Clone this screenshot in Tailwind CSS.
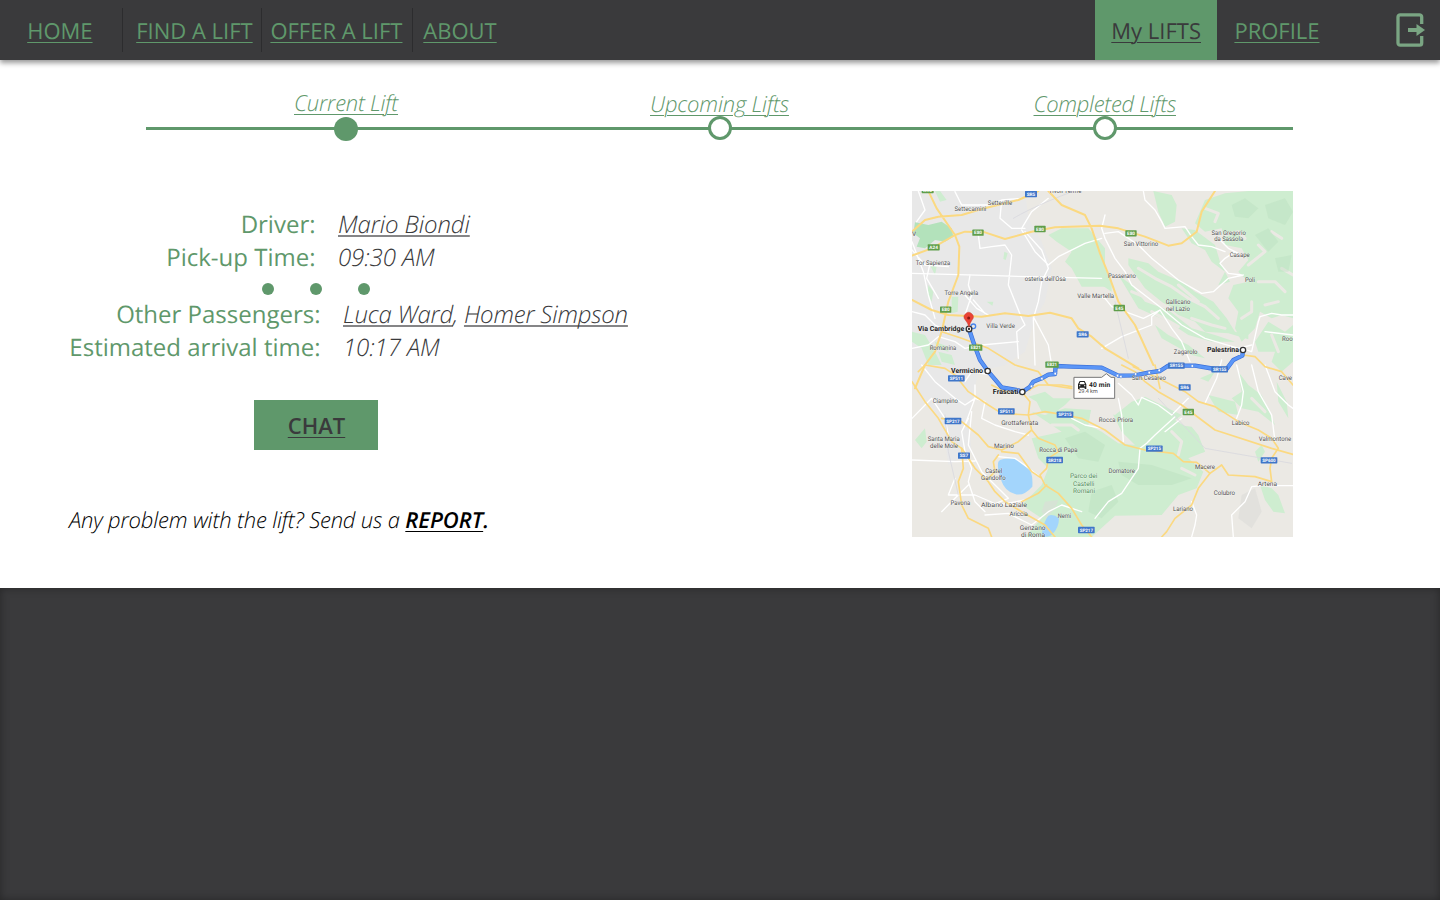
<!DOCTYPE html>
<html lang="en">
<head>
<meta charset="utf-8">
<title>My Lifts</title>
<script src="https://cdn.jsdelivr.net/npm/@tailwindcss/browser@4"></script>
</head>
<body class="w-[1440px] h-[900px] overflow-hidden flex flex-col bg-white font-['Open_Sans',sans-serif] text-[#5f986b] [text-rendering:geometricPrecision]">

<header class="relative h-[60px] shrink-0 flex bg-[#3a3a3c] shadow-[0_3px_5px_rgba(0,0,0,0.4)] text-[22px] leading-[32px] whitespace-nowrap">
  <nav class="flex items-center">
    <div class="w-[123px] h-[44px] flex items-center pl-[27.200px] border-r border-[#2c2c2e]"><a class="pt-px underline decoration-1 underline-offset-[3px]">HOME</a></div>
    <div class="w-[139px] h-[44px] flex items-center pl-[13.200px] border-r border-[#2c2c2e]"><a class="pt-px underline decoration-1 underline-offset-[3px]">FIND A LIFT</a></div>
    <div class="w-[151px] h-[44px] flex items-center pl-[8.400px] border-r border-[#2c2c2e]"><a class="pt-px underline decoration-1 underline-offset-[3px]">OFFER A LIFT</a></div>
    <div class="h-[44px] flex items-center pl-[10.300px]"><a class="pt-px underline decoration-1 underline-offset-[3px]">ABOUT</a></div>
  </nav>
  <div class="ml-auto flex items-center">
    <div class="w-[122px] h-[60px] flex items-center pl-[16.300px] bg-[#5f986b] text-[#3a3a3c]"><a class="pt-px underline decoration-1 underline-offset-[3px]">My LIFTS</a></div>
    <div class="w-[179px] h-[60px] flex items-center pl-[17.400px]"><a class="pt-px underline decoration-1 underline-offset-[3px]">PROFILE</a></div>
    <svg class="w-[29px] h-[34px] mr-[15px]" viewBox="0 0 29 34" fill="none" stroke="#7aa583" stroke-width="3.300"><path d="M25.700 11V4a2.200 2.200 0 0 0-2.200-2.200H4.200A2.200 2.200 0 0 0 2 4v26A2.200 2.200 0 0 0 4.200 32.200h19.300a2.200 2.200 0 0 0 2.200-2.200V23"/><path d="M12 17h9" stroke-width="4"/><path d="M20.500 11 29 17 20.500 23z" fill="#7aa583" stroke="none"/></svg>
  </div>
</header>

<main class="h-[528px] shrink-0">
  <section class="relative h-[90px] w-[1440px] text-[22px] leading-[30px] font-light italic whitespace-nowrap">
    <div class="absolute left-[146px] top-[66.500px] w-[1147px] h-[3px] bg-[#5f986b]"></div>
    <a class="absolute left-[294px] top-[28px] underline decoration-1 underline-offset-[3px] tracking-[-0.25px]">Current Lift</a>
    <a class="absolute left-[650px] top-[29px] underline decoration-1 underline-offset-[3px] tracking-[-0.18px]">Upcoming Lifts</a>
    <a class="absolute left-[1033.500px] top-[29px] underline decoration-1 underline-offset-[3px] tracking-[-0.31px]">Completed Lifts</a>
    <span class="absolute left-[334px] top-[57px] size-6 rounded-full bg-[#5f986b]"></span>
    <span class="absolute left-[708px] top-[56px] size-6 rounded-full bg-white border-3 border-[#5f986b]"></span>
    <span class="absolute left-[1093px] top-[56px] size-6 rounded-full bg-white border-3 border-[#5f986b]"></span>
  </section>

  <div class="flex justify-between pr-[147px] pt-[41px]">
    <section class="pt-[17px] text-[24px] leading-[33px] whitespace-nowrap">
      <div class="flex"><span class="w-[315.500px] text-right">Driver:</span><span class="ml-[22.500px] font-light italic text-[#3a3a3c] tracking-[-0.13px]"><a class="underline decoration-2 decoration-[#858587] underline-offset-[2px] [text-decoration-skip-ink:none]">Mario Biondi</a></span></div>
      <div class="flex"><span class="w-[315.500px] text-right">Pick-up Time:</span><span class="ml-[22.500px] font-light italic text-[#3a3a3c] tracking-[-0.1px]">09:30 AM</span></div>
      <div class="flex gap-9 pl-[262px] pt-[9px] pb-[3px]"><i class="size-3 rounded-full bg-[#5f986b]"></i><i class="size-3 rounded-full bg-[#5f986b]"></i><i class="size-3 rounded-full bg-[#5f986b]"></i></div>
      <div class="flex"><span class="w-[320.500px] text-right">Other Passengers:</span><span class="ml-[22.500px] font-light italic text-[#3a3a3c] tracking-[-0.2px]"><a class="underline decoration-2 decoration-[#858587] underline-offset-[2px] [text-decoration-skip-ink:none]">Luca Ward</a>, <a class="underline decoration-2 decoration-[#858587] underline-offset-[2px] [text-decoration-skip-ink:none]">Homer Simpson</a></span></div>
      <div class="flex"><span class="w-[320.500px] text-right">Estimated arrival time:</span><span class="ml-[22.500px] font-light italic text-[#3a3a3c] tracking-[-0.1px]">10:17 AM</span></div>
      <button class="ml-[254px] mt-[36px] w-[124px] h-[50px] flex items-center justify-center bg-[#5f986b] text-[#3a3a3c] text-[22px] leading-[30px] font-semibold"><span class="ml-px underline decoration-1 underline-offset-[3px]">CHAT</span></button>
      <p class="ml-[69px] mt-[55px] text-[22px] leading-[30px] font-light italic text-black tracking-[-0.18px]">Any problem with the lift? Send us a <b class="font-semibold tracking-normal"><a class="underline decoration-1 underline-offset-[3px]">REPORT</a>.</b></p>
    </section>

    <svg id="map" class="w-[381px] h-[346px] font-[Roboto,sans-serif]" viewBox="21 18 1143 1038" stroke-linejoin="round" stroke-linecap="round">
      <rect x="21" y="18" width="1143" height="1038" fill="#ebe9e4"/>
      <path fill="#e8e8e8" d="M21 18H360L370 100 410 170 440 250 420 350 390 400 360 500 300 540 220 560 190 700 200 800 130 840 110 700 21 600z"/>
      <!-- parks and hills -->
      <g fill="#ceedd0">
        <path fill="#b3e2bb" d="M30 112 70 120 110 110 140 130 145 155 120 170 90 165 60 190 35 185 45 160 25 145z"/>
        <path d="M90 18 105 18 125 45 105 50zM430 150 470 130 550 130 600 190 600 305 530 305 500 250 480 230 500 200 455 170zM298 200 308 205 302 225 295 222zM70 300 85 320 80 350 68 330zM140 335 160 335 158 380 140 385zM75 240 95 245 90 270zM245 350 265 350 262 362zM21 440 60 450 90 500 110 540 70 540 50 490 21 470zM90 470 130 485 130 500 95 490zM30 765 60 730 65 770 50 790zM100 500 140 510 150 540 110 530z"/>
        <path d="M745 18 800 30 815 60 810 110 780 125 760 80z"/>
        <path d="M885 80 900 45 960 25 1030 18H1164V400L1130 390 1100 400 1065 380 1050 430 1010 470 990 430 1000 380 970 340 985 300 1030 290 1000 260 1030 225 1010 190 960 180 950 130 900 140 870 115z"/>
        <path d="M830 130 870 135 930 180 945 230 975 290 940 300 960 260 920 230 900 195 860 175z"/>
        <path d="M670 220 730 235 760 260 830 290 870 320 925 350 965 400 990 440 1030 450 1030 463 970 445 900 440 870 410 820 390 770 350 720 310 670 240zM640 270 680 300 720 350 790 375 860 430 930 450 990 470 920 470 850 450 790 410 700 370zM750 420 790 450 850 480 900 520 860 510 770 460zM590 235 620 285 620 320 590 300z"/>
        <path d="M1050 470 1090 410 1140 440 1164 420V530L1130 560 1100 530 1110 500 1060 500zM1000 560 1030 600 1070 630 1110 720 1060 680 1010 670 980 640 1010 620zM1115 590 1145 650 1150 700 1120 650zM910 630 990 650 1000 690 940 680zM885 580 930 560 910 590z"/>
        <path d="M370 635 420 620 445 640 500 640 480 660 440 690 410 680 395 650zM380 680 420 690 480 670 560 675 630 690 680 650 720 635 770 660 830 690 810 705 850 730 880 760 900 800 850 820 895 860 875 910 820 930 770 990 630 992 560 1056 360 1056 410 1000 350 960 410 900 430 850 400 820 380 760 470 740z"/>
        <path d="M820 720 860 725 880 750 900 800 860 810 850 770zM1065 900 1100 910 1120 930 1140 985 1105 980 1080 945zM1050 800 1070 780 1080 800 1060 830z"/>
      </g>
      <g fill="none" stroke="#ebe9e4" stroke-width="9">
        <path d="M700 250 750 280 800 305 850 340 900 365 940 400M680 320 740 345 800 370M820 300 880 350M860 400 920 420 960 430M740 380 820 425M900 70 940 85 930 110M1030 240 1080 200 1060 180M1100 140 1130 160M1060 290 1110 290 1140 320M1010 400 1040 380 1040 350M1080 360 1120 350M960 150 1000 140 1020 160M1100 450 1120 500M1130 250 1164 270"/>
        <path d="M800 740 830 770 820 810M870 870 830 850M560 690 580 720 620 740M440 720 500 720 520 735M1040 640 1080 680"/>
      </g>
      <path fill="#ebe9e4" d="M560 665 620 680 650 740 690 780 640 775 590 740 550 720z"/>
      <g fill="#b9dfbd" opacity=".4">
        <path d="M980 60 1020 40 1060 70 1030 100 990 95zM1080 60 1140 40 1164 80 1140 120 1090 100zM1050 150 1090 130 1120 170 1090 200zM1110 220 1160 210 1150 260 1120 260z"/>
        <path d="M480 760 540 740 600 780 580 830 520 820zM640 830 740 840 860 880 800 900 700 900 650 870zM560 920 620 900 640 950 590 1000 550 980z"/>
      </g>
      <path fill="#dcdcd8" opacity=".6" d="M1010 930 1050 910 1070 980 1040 1030 1000 1000zM420 950 460 945 450 970 425 1000 410 980z"/>
      <!-- lakes -->
      <path fill="#a3d5fc" d="M280 830Q285 820 330 820Q350 835 368 850Q385 860 382 905Q355 935 330 927Q300 920 288 885Q275 850 280 830zM430 992Q445 985 462 1000Q462 1030 440 1050Q425 1060 410 1050Q415 1010 430 992z"/>
      <!-- minor roads -->
      <g fill="none" stroke="#fff" stroke-width="4">
        <path d="M21 195 60 240 130 245M21 265 270 272 370 275 590 280M40 18 60 75 35 110M21 170 55 260 70 330 90 400M75 235 65 280 100 340M150 20 170 60 250 60 290 45 350 40M290 45 285 100 320 130 360 130M350 130 380 80 430 40M220 150 225 190 260 185 300 180 320 210 310 300 350 400 360 420 335 440 340 520M360 140 410 195 430 250 410 290 400 350 385 400 390 540M350 135 390 200 430 240 460 215 540 175 590 160M385 395 430 480 440 540M195 270 190 300 200 330 180 390M180 330 215 370 250 390M205 345 240 385M21 380 60 390 90 420 130 440M21 490 70 480 100 455 150 470 180 490 230 480 340 470"/>
        <path d="M600 90 590 130 600 160 630 220 660 260 680 300 770 370 830 420 900 460 1000 490M715 18 720 45 750 75 770 110 780 130 840 125 860 155 880 180 920 185 960 200M600 145 640 140 700 180 740 220 820 285 890 325 925 320 970 280 1015 270M1010 270 970 265 945 235 960 220 990 200M945 165 970 190 1000 205M765 375 715 400 620 365 600 340 585 335M765 375 740 395 740 420 650 455 590 490M765 375 800 430 830 470 855 530M1164 390 1130 390 1100 385 1065 395 1060 410 1040 500 1010 490M1165 450 1080 440M1000 490 1040 480"/>
        <path d="M1040 540 1060 620 1100 690 1110 770M1080 540 1110 620 1150 660 1164 670M950 525 935 580 900 655M995 540 1015 620 1010 660 995 700M640 595 680 630 700 660 710 637 760 660 800 690 850 640M810 695 750 750 725 775 705 790 700 850 650 925 610 950 570 1000M640 640 650 690 655 770M860 950 875 990 870 1020 860 1056M1164 902 1070 902 1040 905 1020 950 980 990 985 1056M830 700 780 740"/>
        <path d="M50 540 90 590 150 640 180 660 210 640 240 650 230 700 270 720 330 740 370 750M190 700 170 740 180 800 200 850 190 890 210 950 240 980M21 825 150 830 210 828M180 590 200 560 260 570M200 680 190 780 230 860 270 900 310 940 260 960M150 880 130 930 210 930 280 960 360 945M110 980 150 940 190 900M210 600 210 640 180 720M21 700 80 640 120 700 130 750M280 815 330 820 365 845 410 880M500 700 540 720 590 730M240 990 310 985 380 1020 430 980 470 960 530 980"/>
      </g>
      <path d="M325 100Q410 50 585 -10M120 690 130 800 160 930M630 350 670 520M760 640 900 790 1160 835" fill="none" stroke="#d9d9de" stroke-width="2.500"/>
      <!-- highways -->
      <g fill="none" stroke="#fbd981" stroke-width="5">
        <path stroke-width="6" d="M70 18 95 70 150 150 163 185 160 270 130 350 110 440 90 500 60 540 30 610M21 212 80 190 150 150 180 140 240 142 300 162 380 140 450 127 585 122 640 130 720 155 790 182 830 175 875 140 890 80 930 18M21 140 60 105 100 95 170 90 230 72 340 45 400 18M21 345 80 375 130 390 230 395 300 385 370 393 435 383 500 400 520 430 560 455 600 490 650 520 700 550M430 18 470 60 540 90 560 130 585 205 615 280 640 350 690 420 745 540"/>
        <path d="M110 440 170 460 250 490 330 540 400 560 430 600 500 610M21 590 60 650 100 700 140 770 170 790 210 850 250 890 270 920 300 950 350 980 420 1020 450 1056M40 560 60 540 120 550 150 570 190 620 250 660 290 685 370 690 420 680 480 690 530 700 600 735 660 780 720 795 805 805 835 830 875 832 915 865"/>
        <path d="M110 700 170 710 220 750 250 785 290 795 340 770 380 735 370 690 375 650 350 620M380 735 400 760 450 780 460 800 430 820 425 850 405 870 420 900 460 925 500 970 530 1020 560 1056M425 900 400 925 350 950M280 810 265 830 270 860 250 880M290 800 340 805 380 860 410 880M170 790 175 850 160 890 170 960 190 1000 250 1030 260 1056"/>
        <path d="M375 615 350 620 300 620 260 600M370 615 400 600 470 600 500 605M650 540 690 560 720 590 760 620 830 660 930 735 1100 790 1164 808M685 545 760 580 800 600 840 620 880 650 930 665 1000 710 1060 735 1100 760 1120 790 1100 820 1095 850 1100 890M915 865 950 840 970 870 1050 875 1100 890M915 865 880 910 860 960 810 1000 785 1040 770 1056M600 490 590 480M1015 510 1050 515 1080 545 1130 560 1164 600M750 540 765 610"/>
      </g>
      <!-- route -->
      <g fill="none">
        <path d="M192 432 208 480 225 525 250 560 270 583 290 607 340 616 352 621 375 605 385 590 410 580 430 569 450 567 452 543 500 545 590 548 640 572 690 571 730 563 765 558 790 542 870 542 930 552 965 552 985 525 1012 512 1014 497" stroke="#3c70d8" stroke-width="13"/>
        <path d="M192 432 208 480 225 525 250 560 270 583 290 607 340 616 352 621 375 605 385 590 410 580 430 569 450 567 452 543 500 545 590 548 640 572 690 571 730 563 765 558 790 542 870 542 930 552 965 552 985 525 1012 512 1014 497" stroke="#5b96f7" stroke-width="9"/>
        <circle cx="205" cy="424" r="7" stroke="#4a86ec" stroke-width="4"/>
      </g>
      <g fill="#fff" stroke="#4a7fdc" stroke-width="1.500"><circle cx="380" cy="604" r="4"/><circle cx="411" cy="581" r="4"/><circle cx="451" cy="566" r="4"/><circle cx="638" cy="572" r="4"/><circle cx="648" cy="575" r="4"/><circle cx="692" cy="567" r="4"/><circle cx="733" cy="563" r="4"/><circle cx="763" cy="556" r="4"/><circle cx="862" cy="543" r="4"/></g>
      <g id="shields"></g>
      <g id="labels" text-anchor="middle" paint-order="stroke" stroke="#fff" stroke-opacity=".6" stroke-width="2"></g>
      <g fill="#fff" stroke="#333" stroke-width="4"><circle cx="192" cy="432" r="8.500"/><circle cx="248" cy="558" r="8"/><circle cx="352" cy="621" r="8"/><circle cx="1014" cy="495" r="8"/></g>
      <circle cx="192" cy="432" r="3.500" fill="#333"/>
      <path d="M192 426Q188 412 181 405A13.500 13.500 0 1 1 201 405Q195 413 192 426z" fill="#ea4335" stroke="#c5362b" stroke-width="1.500"/><circle cx="191" cy="399" r="4.500" fill="#8c1a12"/>
      <!-- travel time -->
      <path d="M508 577H590L604 566 618 577H629V640H508z" fill="#fff" stroke="#777" stroke-width="3"/>
      <path fill="#222" d="M524 588H539L544 598V612H539V608H524V612H519V598zM526 591 523 598H540L537 591z"/><path fill="#fff" d="M522 601h4v3h-4zM537 601h4v3h-4z"/>
      <text x="552" y="605" font-size="20" font-weight="700" fill="#222" textLength="64">40 min</text>
      <text x="520" y="625" font-size="17" fill="#555" textLength="58">29.4 km</text>
    </svg>
  </div>
</main>

<footer class="h-[312px] shrink-0 bg-[#3a3a3c] shadow-[inset_0_0_8px_rgba(0,0,0,0.35)]"></footer>

<script>
  const ns = 'http://www.w3.org/2000/svg';
  const add = (parent, tag, attrs, text) => {
    const el = document.createElementNS(ns, tag);
    for (const k in attrs) el.setAttribute(k, attrs[k]);
    if (text) el.textContent = text;
    parent.appendChild(el);
  };
  // text, centre x, baseline y, width, bold, colour
  const labels = [
    ['Settecamini',196,78,95],['Setteville',285,61,73],['Tivoli Terme',480,25,98],['Tor Sapienza',84,240,103],
    ['V',27,152,11],['osteria dell\'Osa',421,288,123],['Torre Angela',169,331,101],['Villa Verde',287,428,86],['Romanina',114,494,80],
    ['Valle Martella',572,339,111],['San Vittorino',708,184,103],['San Gregorio',971,149,103],['da Sassola',971,169,87],
    ['Casape',1004,217,60],['Poli',1035,292,30],['Passerano',651,279,84],['Gallicano',819,357,74],['nel Lazio',819,377,72],
    ['Zagarolo',842,508,71],['Roo',1147,467,32],['Via Cambridge',108,439,140,1],['Palestrina',954,502,96,1],
    ['Vermicino',186,564,96,1],['Frascati',302,628,77,1],['Ciampino',121,653,76],['Grottaferrata',344,720,111],
    ['Santa Maria',116,767,96],['delle Mole',117,788,84],['Marino',297,788,60],['Rocca di Papa',460,800,115],
    ['Castel',266,864,51],['Gandolfo',265,885,74],['Pavona',166,960,59],['Albano Laziale',297,965,138],['Ariccia',341,994,55],
    ['Nemi',478,1000,40],['Genzano',383,1034,77],['di Roma',384,1055,72],['Parco dei',536,880,82,0,'#4c8a56'],
    ['Castelli',536,902,64,0,'#4c8a56'],['Romani',537,924,66,0,'#4c8a56'],['San Cesareo',732,585,102],['Cave',1141,586,40],
    ['Rocca Priora',633,712,103],['Labico',1007,719,53],['Valmontone',1110,768,97],['Macere',900,851,60],['Domatore',650,865,79],
    ['Artena',1087,904,58],['Colubro',958,930,64],['Lariano',834,979,60]
  ];
  for (const [t, x, y, w, bold, c] of labels) {
    const attrs = { x, y, 'font-size': bold ? 21 : 19.5, 'font-weight': bold ? 700 : 400, fill: c || (bold ? '#222' : '#4e4e4e') };
    if (t.length > 1) { attrs.textLength = w; attrs.lengthAdjust = 'spacingAndGlyphs'; }
    add(document.getElementById('labels'), 'text', attrs, t);
  }
  // text, centre x, centre y, width, colour
  const B = '#3f76c9', G = '#5f9e4a';
  const shields = [
    ['A90',68,15,36,G],['SR5',378,27,36,B],['E80',219,143,34,G],['E80',405,132,34,G],['A24',86,187,36,G],['E80',122,374,34,G],['SR6',533,448,36,B],
    ['E821',212,488,40,G],['E821',441,539,40,G],['E80',678,145,34,G],['E45',643,369,34,G],['SP511',154,580,50,B],
    ['SP511',304,679,50,B],['SP217',144,708,50,B],['SP215',480,689,50,B],['SS7',177,812,36,B],['SR218',449,825,50,B],
    ['SP217',544,1035,50,B],['SR155',814,542,50,B],['SR155',944,553,50,B],['SR6',839,607,36,B],['E45',850,681,34,G],
    ['SP215',748,791,50,B],['SP600',1092,826,50,B]
  ];
  for (const [t, x, y, w, c] of shields) {
    const g = document.getElementById('shields');
    add(g, 'rect', { x: x - w / 2, y: y - 9.5, width: w, height: 19, rx: 2, fill: c });
    add(g, 'text', { x, y: y + 5, 'font-size': 14, 'font-weight': 700, fill: '#fff', 'text-anchor': 'middle', textLength: w - 10, lengthAdjust: 'spacingAndGlyphs' }, t);
  }
</script>
</body>
</html>
